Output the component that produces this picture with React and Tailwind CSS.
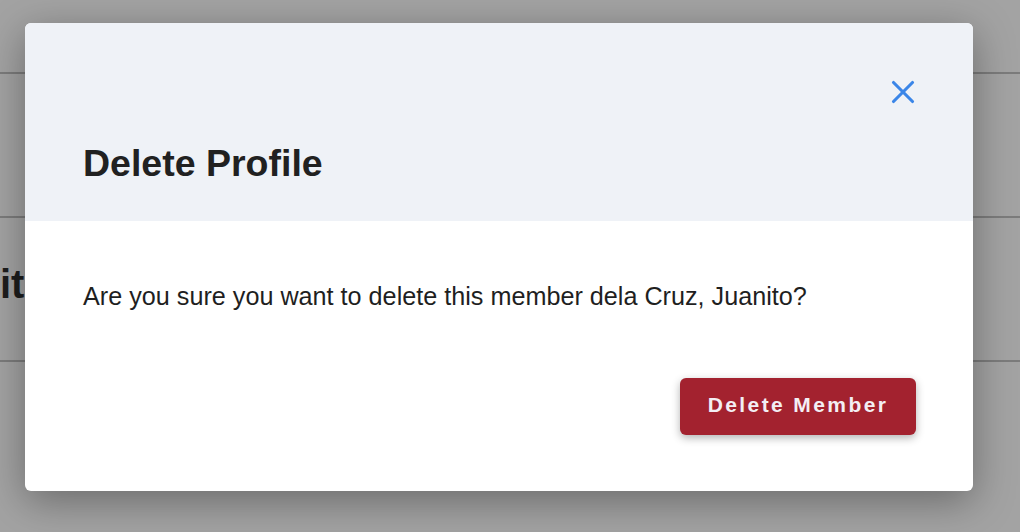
import { X } from 'lucide-react';

export default function App() {
  return (
    <div className="relative w-[1020px] h-[532px] overflow-hidden bg-[#a3a3a3] font-['Liberation_Sans',Arial,sans-serif]">
      {/* Dimmed page behind the dialog */}
      <div className="flex flex-col pt-[72px]">
        <div className="h-[144px] border-t-2 border-[#7c7c7c]" />
        <div className="h-[144px] border-t-2 border-[#7c7c7c] pt-[46px]">
          <span className="text-[40px] leading-none font-bold text-[#1d1d1d]">ito</span>
        </div>
        <div className="h-[144px] border-t-2 border-[#7c7c7c]" />
      </div>

      {/* Dialog */}
      <div className="absolute left-[25px] top-[23px] w-[948px] h-[468px] rounded-md bg-white shadow-[0_10px_40px_rgba(0,0,0,0.35)] overflow-hidden flex flex-col">
        <div className="h-[198px] bg-[#eff2f7] pl-[58px] pr-[51px] flex flex-col">
          <div className="flex justify-end pt-[50px]">
            <button className="text-[#3b86e8] w-[38px] h-[38px] flex items-center justify-center">
              <X size={38} strokeWidth={2} />
            </button>
          </div>
          <h2 className="mt-[34px] text-[37.5px] leading-none font-bold text-[#212121]">Delete Profile</h2>
        </div>

        <div className="flex-1 pl-[58px] pr-[57px] flex flex-col">
          <p className="mt-[63px] text-[25.2px] leading-none text-[#1f1f1f]">
            Are you sure you want to delete this member dela Cruz, Juanito?
          </p>
          <div className="flex justify-end mt-[69px]">
            <button className="w-[236px] h-[57px] pb-[4px] rounded-md bg-[#a3222f] text-[#f3eef4] text-[21px] font-bold tracking-[2.4px] shadow-[0_3px_8px_rgba(0,0,0,0.3)]">
              Delete Member
            </button>
          </div>
        </div>
      </div>
    </div>
  );
}
